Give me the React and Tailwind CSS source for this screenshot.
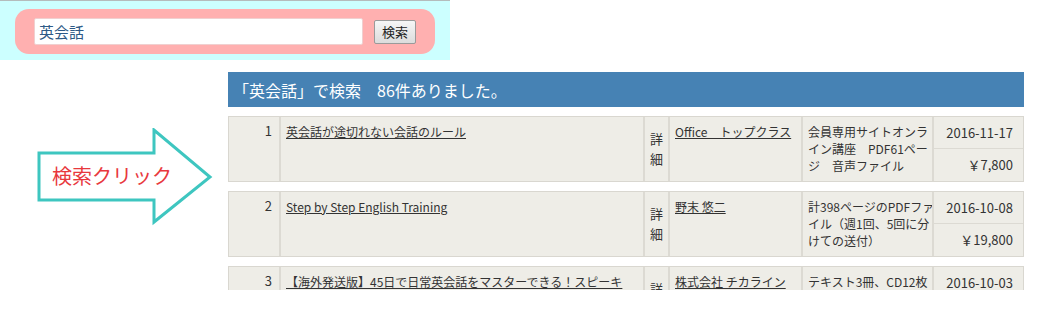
import React from "react";

const font = { fontFamily: '"Noto Sans CJK JP", "Noto Sans", sans-serif' };

const rows = [
    {
        no: 1,
        title: "英会話が途切れない会話のルール",
        author: "Office　トップクラス",
        desc: ["会員専用サイトオンラ", "イン講座　PDF61ペー", "ジ　音声ファイル"],
        date: "2016-11-17",
        price: "￥7,800",
    },
    {
        no: 2,
        title: "Step by Step English Training",
        author: "野末 悠二",
        desc: ["計398ページのPDFファ", "イル（週1回、5回に分", "けての送付）"],
        date: "2016-10-08",
        price: "￥19,800",
    },
    {
        no: 3,
        title: "【海外発送版】45日で日常英会話をマスターできる！スピーキ",
        author: "株式会社 チカライン",
        desc: ["テキスト3冊、CD12枚", "", ""],
        date: "2016-10-03",
        price: "",
    },
];

const Row = ({ r }) => (
    <div className="grid grid-cols-[50px_364px_25px_133px_131px_91px] h-[66px] bg-[#eeede7] border border-[#d9d7d0] text-[#333] mb-[9px]">
        <div className="text-right pr-[7px] pt-[5px] text-[13px] leading-[18px]">{r.no}</div>
        <div className="border-l-2 border-[#dcdad3] pl-[5px] pt-[6px] text-[12px] leading-[17px]">
            <span className="underline">{r.title}</span>
        </div>
        <div className="border-l-2 border-[#dcdad3] flex flex-col items-center justify-center text-[13px] leading-[20px]">
            <span>詳</span>
            <span>細</span>
        </div>
        <div className="border-l-2 border-[#dcdad3] pl-[5px] pt-[6px] text-[12px] leading-[17px]">
            <span className="underline">{r.author}</span>
        </div>
        <div className="border-l-2 border-[#dcdad3] pl-[5px] pt-[6px] text-[12px] leading-[17px]">
            {r.desc.map((d, i) => (
                <div key={i} className="whitespace-nowrap">{d}</div>
            ))}
        </div>
        <div className="border-l-2 border-[#dcdad3] flex flex-col text-[13px]">
            <div className="h-[32px] flex items-center justify-end pr-[10px] border-b border-[#dcdad3]">{r.date}</div>
            <div className="flex-1 flex items-center justify-end pr-[10px]">{r.price}</div>
        </div>
    </div>
);

export default function App() {
    return (
        <div className="w-[1040px] h-[320px] bg-white overflow-hidden" style={font}>
            <div className="w-[450px] h-[60px] bg-[#ccffff] border-t border-[#b4bcbc] pt-[8px] pl-[15px]">
                <div className="w-[420px] h-[45px] rounded-[14px] bg-[#ffb0b0] flex items-center pl-[19px] gap-[11px]">
                    <input
                        defaultValue="英会話"
                        className="w-[329px] h-[27px] bg-white rounded-[2px] border border-[#f0d0d0] px-[4px] text-[15px] text-[#2e5a86] outline-none"
                    />
                    <button className="w-[42px] h-[24px] border border-[#9a9a9a] rounded-[2px] bg-gradient-to-b from-[#f6f6f6] to-[#dcdcdc] text-[13px] text-[#222]">
                        検索
                    </button>
                </div>
            </div>
            <div className="flex mt-[12px] h-[218px] overflow-hidden">
                <div className="w-[228px] pt-[56px] pl-[36px]">
                    <div className="relative w-[180px] h-[100px]">
                        <svg width="180" height="100" viewBox="0 0 180 100">
                            <polygon
                                points="3,25 118,25 118,2 174,49 118,94 118,72 3,72"
                                fill="white"
                                stroke="#3ec6c0"
                                strokeWidth="3"
                                strokeLinejoin="miter"
                            />
                        </svg>
                        <div className="absolute left-[16px] top-[34px] text-[20px] leading-[28px] text-[#e8383d]">
                            検索クリック
                        </div>
                    </div>
                </div>
                <div className="w-[796px]">
                    <div className="h-[35px] bg-[#4682b4] text-white text-[16px] flex items-center pl-[5px] mb-[9px]">
                        「英会話」で検索　86件ありました。
                    </div>
                    {rows.map((r) => (
                        <Row key={r.no} r={r} />
                    ))}
                </div>
            </div>
        </div>
    );
}
